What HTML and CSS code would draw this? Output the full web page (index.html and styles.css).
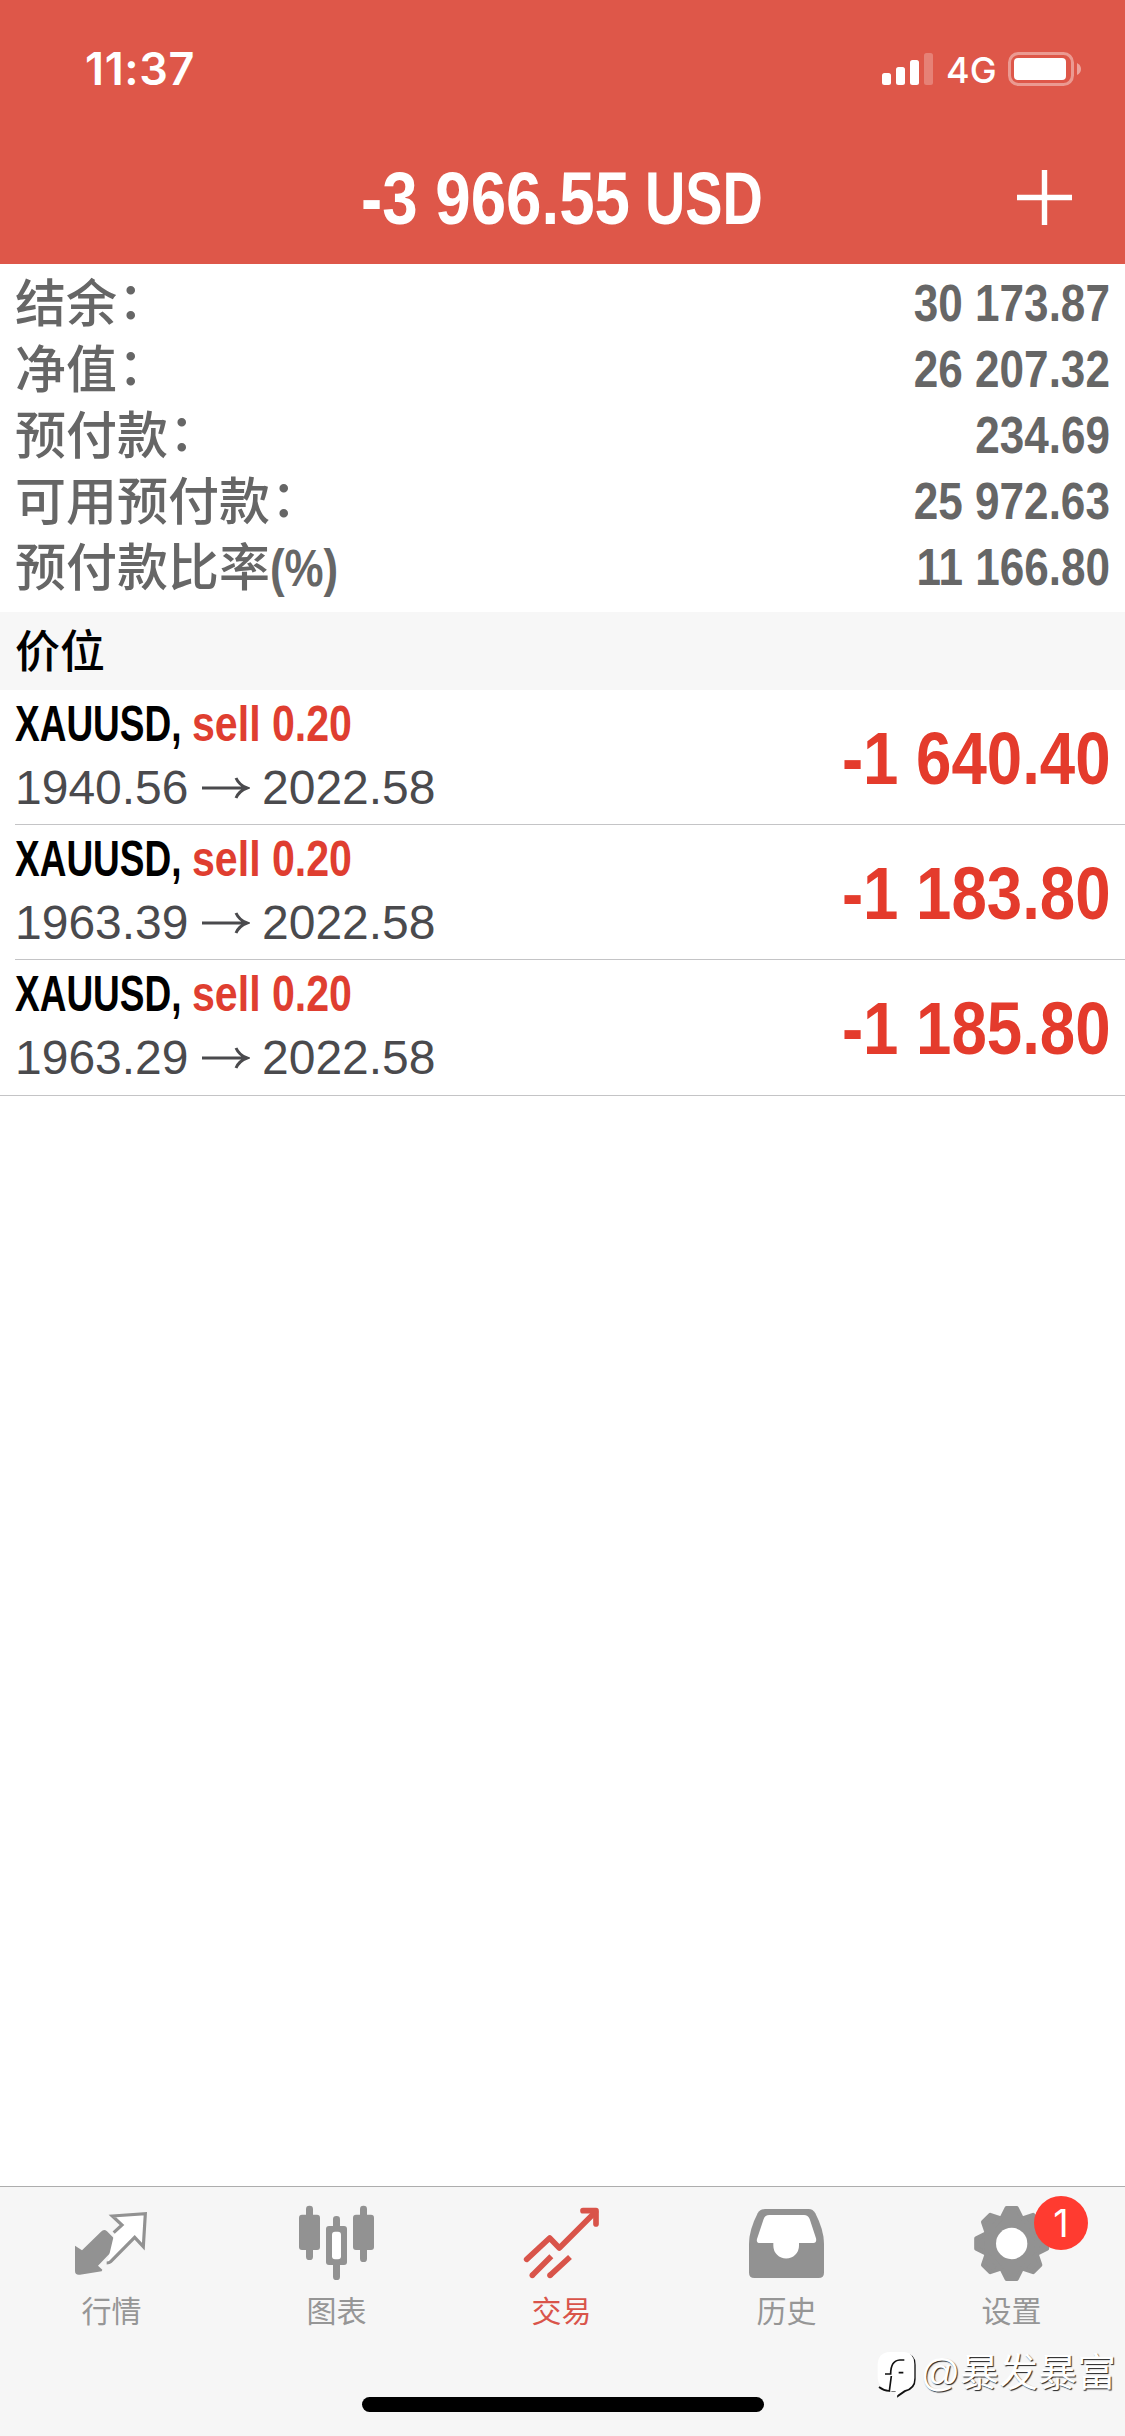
FILE: index.html
```html
<!DOCTYPE html>
<html lang="zh-CN">
<head>
<meta charset="utf-8">
<title>交易</title>
<link rel="stylesheet" href="styles.css">
</head>
<body>
<div class="screen">
  <header class="header">
    <div class="status">
      <span class="time">11:37</span>
      <div class="status-right">
        <svg class="signal" width="51" height="32" viewBox="0 0 51 32" fill="#fff">
          <rect x="0" y="20" width="9" height="12" rx="2.5"/>
          <rect x="14" y="14" width="9" height="18" rx="2.5"/>
          <rect x="28" y="7" width="9" height="25" rx="2.5"/>
          <rect x="42" y="0" width="9" height="32" rx="2.5" opacity=".25"/>
        </svg>
        <span class="network">4G</span>
        <svg class="battery" width="74" height="34" viewBox="0 0 74 34">
          <rect x="1.5" y="1.5" width="63" height="31" rx="9" fill="none" stroke="#fff" stroke-width="3" opacity=".4"/>
          <rect x="6" y="6" width="52" height="22" rx="4" fill="#fff"/>
          <path d="M69 11q4 2 4 6t-4 6z" fill="#fff" opacity=".45"/>
        </svg>
      </div>
    </div>
    <div class="navbar">
      <h1 class="title"><span class="amount">-3 966.55</span> <span class="currency">USD</span></h1>
      <svg class="add" width="55" height="55" viewBox="0 0 55 55" stroke="#fff" stroke-width="5.4"><path d="M27.5 0v55M0 27.5h55"/></svg>
    </div>
  </header>

  <section class="summary">
    <div class="line"><span class="label">结余<span class="colon">：</span></span><span class="value">30 173.87</span></div>
    <div class="line"><span class="label">净值<span class="colon">：</span></span><span class="value">26 207.32</span></div>
    <div class="line"><span class="label">预付款<span class="colon">：</span></span><span class="value">234.69</span></div>
    <div class="line"><span class="label">可用预付款<span class="colon">：</span></span><span class="value">25 972.63</span></div>
    <div class="line"><span class="label">预付款比率<span class="percent">(%)</span></span><span class="value">11 166.80</span></div>
  </section>

  <h2 class="section-title">价位</h2>

  <ul class="positions">
    <li class="position">
      <div class="deal">
        <div class="deal-name"><span class="symbol">XAUUSD,</span><span class="side">sell 0.20</span></div>
        <div class="deal-price"><span class="open">1940.56</span><svg class="arrow" width="48" height="22" viewBox="0 0 48 22"><path d="M0 11h45M34 1q3 7 11 10q-8 3-11 10"/></svg><span>2022.58</span></div>
      </div>
      <span class="profit">-1 640.40</span>
    </li>
    <li class="position">
      <div class="deal">
        <div class="deal-name"><span class="symbol">XAUUSD,</span><span class="side">sell 0.20</span></div>
        <div class="deal-price"><span class="open">1963.39</span><svg class="arrow" width="48" height="22" viewBox="0 0 48 22"><path d="M0 11h45M34 1q3 7 11 10q-8 3-11 10"/></svg><span>2022.58</span></div>
      </div>
      <span class="profit">-1 183.80</span>
    </li>
    <li class="position">
      <div class="deal">
        <div class="deal-name"><span class="symbol">XAUUSD,</span><span class="side">sell 0.20</span></div>
        <div class="deal-price"><span class="open">1963.29</span><svg class="arrow" width="48" height="22" viewBox="0 0 48 22"><path d="M0 11h45M34 1q3 7 11 10q-8 3-11 10"/></svg><span>2022.58</span></div>
      </div>
      <span class="profit">-1 185.80</span>
    </li>
  </ul>

  <nav class="tabbar">
    <div class="tabs">
      <a class="tab">
        <svg class="icon" viewBox="225 108 225 225">
          <path d="M225 227L246 241L303 185Q312 176 321 184L350 213Q358 221 350 229L294 287L307 299L305 304L240 314Q225 316 225 303Z" fill="#929292"/>
          <path d="M344 186L368 164L338 138L436 131L430 228L404 202L329 279H322" fill="#fff" stroke="none"/>
          <path d="M341 188L366 165L337 138L436 131L430 230L404 202L332 275Q328 279 320 279" fill="none" stroke="#929292" stroke-width="9.5"/>
        </svg>
        <span class="tab-label">行情</span>
      </a>
      <a class="tab">
        <svg class="icon" viewBox="900 108 225 225">
          <g fill="#929292">
            <rect x="897" y="134" width="63" height="106" rx="9"/><rect x="918" y="107" width="21" height="163" rx="10"/>
            <rect x="978" y="168" width="63" height="117" rx="9"/><rect x="999" y="138" width="21" height="192" rx="10"/>
            <rect x="1059" y="134" width="63" height="106" rx="9"/><rect x="1080" y="107" width="21" height="169" rx="10"/>
          </g>
          <rect x="996" y="185" width="27" height="83" rx="9" fill="#fff"/>
        </svg>
        <span class="tab-label">图表</span>
      </a>
      <a class="tab active">
        <svg class="icon" viewBox="225 108 225 225" fill="none" stroke="#d9544a" stroke-width="17" stroke-linejoin="round">
          <path d="M230 268L299 204L328 234L436 126" stroke-linecap="round"/>
          <path d="M399 122H438V162" stroke-linecap="round"/>
          <path d="M304 259L247 316M360 261L300 316"/>
          <g fill="#d9544a" stroke="none"><circle cx="247" cy="316" r="8.5"/><circle cx="300" cy="316" r="8.5"/></g>
        </svg>
        <span class="tab-label">交易</span>
      </a>
      <a class="tab">
        <svg class="icon" viewBox="900 108 225 225">
          <path d="M945 117H1076Q1089 117 1096 130Q1122 180 1122 222V308Q1122 324 1106 324H913Q897 324 897 308V222Q897 180 923 130Q930 117 945 117Z" fill="#929292"/>
          <path d="M958 135H1062Q1074 135 1079 147L1098 205Q1101 219 1090 219H1047V227A38.5 38.5 0 0 1 970 227V219H930Q918 219 921 207L941 147Q945 135 958 135Z" fill="#fff"/>
        </svg>
        <span class="tab-label">历史</span>
      </a>
      <a class="tab">
        <svg class="icon" viewBox="375 108 225 225">
          <defs><path id="tooth" d="M-15-106H15L30-76H-30Z"/></defs>
          <g transform="translate(485 220.5)" fill="#929292" stroke="#929292" stroke-width="13" stroke-linejoin="round">
            <circle r="81"/>
            <use href="#tooth"/><use href="#tooth" transform="rotate(45)"/><use href="#tooth" transform="rotate(90)"/><use href="#tooth" transform="rotate(135)"/>
            <use href="#tooth" transform="rotate(180)"/><use href="#tooth" transform="rotate(225)"/><use href="#tooth" transform="rotate(270)"/><use href="#tooth" transform="rotate(315)"/>
            <circle r="47" fill="#fff" stroke="none"/>
          </g>
        </svg>
        <span class="badge">1</span>
        <span class="tab-label">设置</span>
      </a>
    </div>
    <div class="home-indicator"></div>
    <div class="watermark">
      <svg class="watermark-logo" width="40" height="46" viewBox="0 0 120 138">
        <path d="M42 4H86Q116 6 116 38V82Q116 112 86 119L60 137L62 119H46Q8 108 8 74V38Q10 6 42 4Z" fill="#111"/>
        <path d="M38 0H82Q112 2 112 36V78Q112 108 82 115L54 134L56 118H42Q2 108 2 74V36Q4 2 38 0Z" fill="#fff"/>
        <path d="M24 66H41Q41 26 68 24H82M65 62H79M43 72L37 117Q20 116 6 105" fill="none" stroke="#111" stroke-width="5"/>
      </svg>
      <span class="watermark-name">@暴发暴富</span>
    </div>
  </nav>
</div>
</body>
</html>
```
FILE: styles.css
```css
* { box-sizing: border-box; }

body {
  margin: 0;
  background: #fff;
  font-family: "Liberation Sans", "Noto Sans CJK SC", sans-serif;
}

.screen {
  display: flex;
  flex-direction: column;
  width: 1125px;
  height: 2436px;
  overflow: hidden;
  white-space: nowrap;
}

/* header */
.header {
  height: 264px;
  background: #de5749;
  color: #fff;
}

.status {
  display: flex;
  justify-content: space-between;
  align-items: center;
  height: 138px;
  padding: 0 43px 0 85px;
}

.time {
  font: 600 45px/60px Inter, sans-serif;
  letter-spacing: .6px;
}

.status-right {
  display: flex;
  align-items: center;
}

.network {
  width: 50px;
  margin: 2px 12px 0 13px;
  font: 500 36px/40px Inter, sans-serif;
}

.navbar {
  display: grid;
  grid-template-columns: 1fr auto 1fr;
  align-items: center;
  height: 118px;
  padding: 0 53px;
}

.title {
  display: flex;
  grid-column: 2;
  margin: 4px 0 0;
  font-size: 74px;
  line-height: 90px;
  font-weight: 700;
}

.amount {
  width: 284px;
  transform: scaleX(.86);
  transform-origin: left;
}

.currency {
  width: 120px;
  transform: scaleX(.755);
  transform-origin: left;
}

.add { justify-self: end; }

/* account summary */
.summary {
  height: 348px;
  padding: 7px 16px 0;
  color: #666;
  font-size: 51px;
  line-height: 66px;
}

.line {
  display: flex;
  justify-content: space-between;
  height: 66px;
}

.label {
  margin: 1px 0 0 -1px;
  font-weight: 500;
}

.colon {
  display: inline-block;
  transform: translate(1px, -3px);
}

.percent {
  display: inline-block;
  font-weight: 700;
  transform: scaleX(.86);
  transform-origin: left;
}

.value {
  margin-right: -1px;
  font-weight: 700;
  transform: scaleX(.864);
  transform-origin: right;
}

.section-title {
  height: 78px;
  margin: 0;
  padding: 0 15px;
  background: #f7f7f7;
  color: #000;
  font-size: 45px;
  line-height: 82px;
  font-weight: 500;
}

/* open positions */
.positions {
  margin: 0;
  padding: 0;
  list-style: none;
}

.position {
  display: flex;
  justify-content: space-between;
  height: 135px;
  margin-left: 15px;
  padding-right: 16px;
  border-bottom: 1px solid #c4c4c6;
}

.position:last-child {
  height: 136px;
  margin-left: 0;
  padding-left: 15px;
}

.deal-name {
  display: flex;
  height: 67px;
  font-size: 50px;
  line-height: 69px;
  font-weight: 700;
}

.symbol {
  width: 177px;
  color: #000;
  transform: scaleX(.74);
  transform-origin: left;
}

.side {
  color: #df3e30;
  transform: scaleX(.822);
  transform-origin: left;
}

.deal-price {
  display: flex;
  align-items: center;
  color: #4a4a4d;
  font-size: 48px;
  line-height: 62px;
}

.open { width: 186px; }

.arrow {
  margin: 0 12px 0 1px;
  fill: none;
  stroke: #4a4a4d;
  stroke-width: 3;
}

.profit {
  margin-right: -2px;
  color: #e43b2c;
  font-size: 73.5px;
  line-height: 137px;
  font-weight: 700;
  transform: scaleX(.865);
  transform-origin: right;
}

/* bottom bar */
.tabbar {
  position: relative;
  height: 250px;
  margin-top: auto;
  border-top: 1px solid #adadad;
  background: #f6f6f6;
}

.tabs {
  display: grid;
  grid-template-columns: repeat(5, 225px);
}

.tab {
  position: relative;
  display: flex;
  flex-direction: column;
  align-items: center;
  height: 210px;
  padding-top: 19px;
  color: #969696;
}

.tab.active { color: #d9544a; }

.icon {
  width: 75px;
  height: 75px;
  overflow: visible;
}

.tab-label {
  margin: 11px 2px 0 0;
  font-size: 30px;
  line-height: 40px;
}

.badge {
  position: absolute;
  top: 9px;
  left: 134px;
  width: 54px;
  height: 54px;
  border-radius: 50%;
  background: #ff3b30;
  color: #fff;
  font: 400 38px/54px Inter, sans-serif;
  text-align: center;
}

.home-indicator {
  width: 402px;
  height: 15px;
  margin: 0 auto;
  border-radius: 8px;
  background: #000;
}

.watermark {
  position: absolute;
  top: 165px;
  right: 9px;
  display: flex;
  align-items: flex-start;
  gap: 3px;
}

.watermark-name {
  color: #fff;
  font-size: 39px;
  line-height: 42px;
  text-shadow: 1px 1px 1px #222;
}
```
